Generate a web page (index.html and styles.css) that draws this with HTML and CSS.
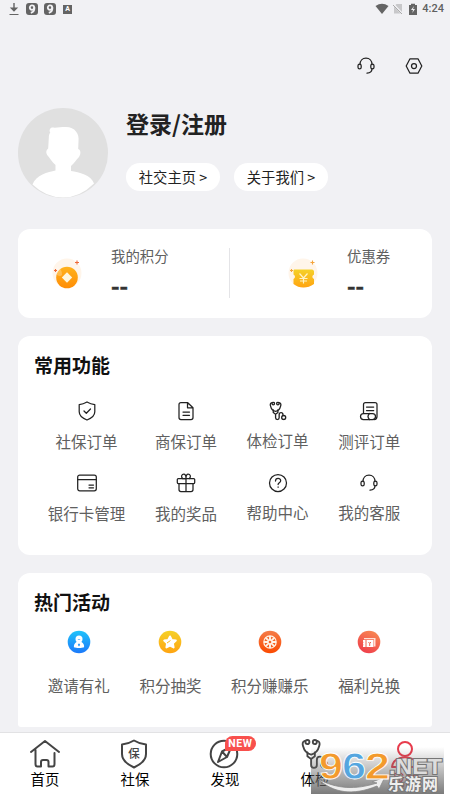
FILE: index.html
```html
<!DOCTYPE html>
<html lang="zh-CN">
<head>
<meta charset="utf-8">
<title>我的</title>
<link rel="stylesheet" href="styles.css">
</head>
<body>
<svg class="defs" width="0" height="0" aria-hidden="true">
  <defs>
    <linearGradient id="gold" x2="0" y2="1"><stop stop-color="#ffb21d"/><stop offset="1" stop-color="#ff8d05"/></linearGradient>
    <linearGradient id="blue" x2="0" y2="1"><stop stop-color="#20c3fa"/><stop offset="1" stop-color="#1c79fa"/></linearGradient>
    <linearGradient id="yellow" x2="0" y2="1"><stop stop-color="#f5d128"/><stop offset="1" stop-color="#ffa411"/></linearGradient>
    <linearGradient id="orange" x2="0" y2="1"><stop stop-color="#f47c48"/><stop offset="1" stop-color="#fb4a00"/></linearGradient>
    <linearGradient id="red" x1=".8" x2=".3" y2="1"><stop stop-color="#f88a52"/><stop offset="1" stop-color="#ef3e4b"/></linearGradient>
    <symbol id="headset" viewBox="0 0 18 18"><path d="M3 7.5C3 3.700 5.500 1.200 9 1.200s6 2.500 6 6.300M15 11.500c0 3-2.200 4.500-5 4.700"/><rect x="1" y="7.200" width="3.200" height="4.600" rx="1.600"/><rect x="13.800" y="7.200" width="3.200" height="4.600" rx="1.600"/></symbol>
    <symbol id="stethoscope" viewBox="0 0 18 18"><path d="M2.500 1.200C1 1.500.9 3 1.500 4.600c.6 2.500 2.200 4.200 4.700 4.800 2.500-.6 4.100-2.300 4.700-4.800.6-1.600.5-3.100-1-3.400"/><circle cx="4" cy="1.900" r="1.200"/><circle cx="8.400" cy="1.900" r="1.200"/><path d="M4 8v2.400l2.200 1.600v3.500c0 2.300 3.400 2.300 3.400 0v-3c0-2.600 3.600-2.600 3.600 0v1M8.400 8v2.400L6.200 12"/><circle cx="13.900" cy="15.200" r="1.900"/></symbol>
  </defs>
</svg>
<div class="screen">
  <header class="status">
    <div class="status-left">
      <svg width="10" height="13" viewBox="0 0 10 13"><path d="M5 0v7M2.500 5.200 5 7.700l2.500-2.500z" fill="#646464" stroke="#646464" stroke-width="1.400"/><path d="M.5 11.500h9" stroke="#646464"/></svg>
      <span class="nine"><svg width="12" height="12" viewBox="0 0 12 12"><circle cx="6" cy="4.600" r="2.200"/><path d="M8.300 4.200c.5 2.700-.9 4.900-3.500 5.600"/></svg></span>
      <span class="nine"><svg width="12" height="12" viewBox="0 0 12 12"><circle cx="6" cy="4.600" r="2.200"/><path d="M8.300 4.200c.5 2.700-.9 4.900-3.500 5.600"/></svg></span>
      <span class="letter">A</span>
    </div>
    <div class="status-right">
      <svg width="14" height="12" viewBox="0 0 14 12"><path d="M.5 3Q7-1.500 13.500 3L7 11z" fill="#646464"/></svg>
      <svg width="10" height="12" viewBox="0 0 10 12"><path d="M3.500 1H9v9.500H1V3.500z" fill="#c8c8ca"/><path d="m.5 1.500 9 9.500" stroke="#f1f1f4" stroke-width="2"/><path d="m0 2 9 9" stroke="#aaa"/></svg>
      <svg width="8" height="12" viewBox="0 0 8 12"><path d="M0 2h2V.8h4V2h2v10H0z" fill="#646464"/><path d="M5 3 2 7h2l-.7 3L6 6H4z" fill="#f1f1f4"/></svg>
      <span class="time">4:24</span>
    </div>
  </header>

  <div class="tools">
    <svg class="line" width="18" height="18"><use href="#headset"/></svg>
    <svg class="line" width="18" height="18" viewBox="0 0 18 18"><path d="M5 1.800h8L16.800 9 13 16.200H5L1.200 9z"/><circle cx="9" cy="9" r="2.500"/></svg>
  </div>

  <section class="profile">
    <svg width="90" height="90" viewBox="0 0 90 90">
      <circle cx="45" cy="45" r="45" fill="#e0e0e0"/>
      <path d="M34 19.500c5 .5 8-.5 14-.5 9 0 13.500 7 12.500 14l-.3 8c2.800 1 2.800 5 .8 8-3 3-4.500 6-8 9v5c8 1 20 4 23 12.500Q62 89.500 45 89.500T14.500 76.500C18 67 30 64 37.500 62.500V57c-3.500-3-5-6-7.500-9-2.500-3-2-6 .2-7.500l.6-10.500c0-3 .5-4 1.500-5.500-1.500-2-.3-4.500 1.700-5z" fill="#fff"/>
    </svg>
    <div class="profile-info">
      <h1>登录/注册</h1>
      <div class="pills"><span class="pill">社交主页 &gt;</span><span class="pill">关于我们 &gt;</span></div>
    </div>
  </section>

  <section class="card wallet">
    <div class="asset">
      <svg width="30" height="32" viewBox="0 0 30 32"><circle cx="15" cy="15" r="14.500" fill="#fff5ea"/><circle cx="15" cy="19.500" r="10.800" fill="url(#gold)"/><path d="m15 14.300 5.200 5.200-5.200 5.200-5.200-5.200z" fill="#fff6dc"/><path d="M5 9a8 8 0 0 1 5 8q-2 2-5 0z" fill="#fff" opacity=".25"/><path d="M25 2.500v4M23 4.500h4M3.500 11v3M2 12.500h3" stroke="#f06a38" stroke-width="1.100"/></svg>
      <div class="asset-text"><span>我的积分</span><b>--</b></div>
    </div>
    <div class="asset second">
      <svg width="30" height="32" viewBox="0 0 30 32"><circle cx="15" cy="15" r="14.500" fill="#fff5ea"/><path d="M6 11.500h18c1 0 2 1 2 2v3c-2.200 1-2.200 3.500 0 4.500v5q-5 3.500-10.500 3.500T5.500 26v-5c2-1 2-3.500 0-4.500v-4z" fill="url(#yellow)"/><path d="m11.500 15.500 4 4.500 4-4.500M15.500 20v5.500M11.500 20.500h8M12 23h7" stroke="#fff3c5" stroke-width="1.200" fill="none"/><path d="M24.500 2.500v4M22.500 4.500h4M3.500 11v3M2 12.500h3" stroke="#f5a43a" stroke-width="1.100"/></svg>
      <div class="asset-text"><span>优惠券</span><b>--</b></div>
    </div>
  </section>

  <section class="card common">
    <h2>常用功能</h2>
    <div class="grid">
      <div class="item"><svg class="line" width="20" height="20" viewBox="0 0 20 20"><path d="M10 1c2.500 1.500 4.500 2.300 7.800 2.600v7.200c0 4-3.300 6.500-7.800 8.200-4.500-1.700-7.800-4.200-7.800-8.200V3.600C5.500 3.300 7.500 2.500 10 1zM7 10l2.300 2.300L13.500 8"/></svg><span>社保订单</span></div>
      <div class="item"><svg class="line" width="20" height="20" viewBox="0 0 20 20"><path d="M11.500 1.500H5Q3 1.500 3 3.500v13q0 2 2 2h10q2 0 2-2V6.800zV6.800H17M7 11h6.500M7 14.300h6.500"/></svg><span>商保订单</span></div>
      <div class="item raised"><svg class="line" width="20" height="20" viewBox="-1 -.5 19 19"><use href="#stethoscope" width="18" height="18"/></svg><span>体检订单</span></div>
      <div class="item"><svg class="line" width="20" height="20" viewBox="0 0 20 20"><path d="M4.500 12V3.500q0-2 2-2H16q2 0 2 2v12q0 3-3 3M7.500 6h7.200M7.500 9.500h7.200"/><rect x="1.500" y="12.500" width="15" height="6" rx="3"/><path d="M10.500 12.500c-2 2-2 4 0 6"/></svg><span>测评订单</span></div>
      <div class="item"><svg class="line" width="20" height="20" viewBox="0 0 20 20"><rect x=".7" y="2" width="18.600" height="15.800" rx="2"/><path d="M.7 6.500h18.600M12 12h4.500M12 14.800h4.500"/></svg><span>银行卡管理</span></div>
      <div class="item"><svg class="line" width="20" height="20" viewBox="0 0 20 20"><rect x="1.300" y="5.500" width="17.400" height="5" rx="1"/><path d="M3 10.500v6q0 2 2 2h10q2 0 2-2v-6M10 5.500v13M10 5.500H6.500C4.500 3 6 1.200 7.800 1.200S10 3 10 5.500c0-2.500.5-4.300 2.200-4.300s3.300 1.800 1.300 4.300"/></svg><span>我的奖品</span></div>
      <div class="item raised"><svg class="line" width="20" height="20" viewBox="0 0 20 20"><circle cx="10" cy="10" r="8.500"/><path d="M7.500 8c0-3.500 5.200-3.500 5.200-.3 0 2-2.600 2.100-2.600 3.800M10.100 13.900v.4"/></svg><span>帮助中心</span></div>
      <div class="item raised"><svg class="line" width="20" height="20" viewBox="-1 -1 20 20"><use href="#headset" width="18" height="18"/></svg><span>我的客服</span></div>
    </div>
  </section>

  <section class="card hot">
    <h2>热门活动</h2>
    <div class="grid">
      <div class="item"><svg width="24" height="24" viewBox="0 0 24 24"><circle cx="12" cy="12" r="11.300" fill="url(#blue)"/><circle cx="12" cy="9" r="3.500" fill="#fff"/><path d="M9.500 12h5c2 1 2.800 3 2.600 5.200-2.500 1-7.700 1-10.200 0C6.700 15 7.500 13 9.500 12z" fill="#fff"/><path d="m12 13.300 1.200 1.500L12 16.500l-1.200-1.700zM10.500 9.300q1.500 1.200 3 0" fill="#2494fa"/></svg><span>邀请有礼</span></div>
      <div class="item"><svg width="24" height="24" viewBox="0 0 24 24"><circle cx="12" cy="12" r="11.300" fill="url(#yellow)"/><path d="m12 6.500 1.800 3.500 4 .6-2.900 2.800.7 4-3.600-1.900-3.600 1.900.7-4-2.900-2.800 4-.6z" fill="#fff" stroke="#fff" stroke-width="2" stroke-linejoin="round"/><path d="m9 13 3.500-2.500" stroke="#fbbc1b"/></svg><span>积分抽奖</span></div>
      <div class="item"><svg width="24" height="24" viewBox="0 0 24 24"><circle cx="12" cy="12" r="11.300" fill="url(#orange)"/><circle cx="12" cy="12" r="6.200" fill="none" stroke="#fff4e8" stroke-width="1.200"/><path d="M12 6v12M6 12h12M7.800 7.800l8.400 8.400M16.200 7.800l-8.400 8.400" stroke="#fff4e8" stroke-width="1.900"/><circle cx="12" cy="12" r="1.300" fill="#f76123"/></svg><span>积分赚赚乐</span></div>
      <div class="item"><svg width="24" height="24" viewBox="0 0 24 24"><circle cx="12" cy="12" r="11.300" fill="url(#red)"/><path d="M7 8h11.500v8.500H17V9.300H7z" fill="#ffe1d6"/><path d="M6 10h10.500v7H6v-1.500q1-.5 0-1.500V13q1-.5 0-1.500z" fill="#fff"/><path d="M9 10v7M11.500 12l1.200 1.500 1.200-1.500M12.700 13.500V16" stroke="#ef6550" fill="none"/></svg><span>福利兑换</span></div>
    </div>
  </section>

  <nav class="tabs">
    <div class="tab"><svg class="tab-icon" width="32" height="32" viewBox="0 0 32 32"><path d="M2 14 16 3l14 11M6.500 12v14q0 2.500 2 2.500H12V24q0-2 2-2h3.500q2 0 2 2v4.500h4q2 0 2-2.500V15"/></svg><span>首页</span></div>
    <div class="tab"><svg class="tab-icon" width="32" height="32" viewBox="0 0 32 32"><path d="M15 2.500c4 2.500 7 3.500 12 4V16c0 6.500-5.500 10.500-12 13.500C8.500 26.500 3 22.500 3 16V6.500c5-.5 8-1.500 12-4z"/><text class="shield-text" x="15" y="20">保</text></svg><span>社保</span></div>
    <div class="tab"><svg class="tab-icon" width="32" height="32" viewBox="0 0 32 32"><circle cx="15" cy="16" r="13.300"/><path d="m22.500 8.500-4.500 10.500-9 5 4-10.500zM13 13.500l5 5.500"/></svg><span>发现</span><b class="badge">NEW</b></div>
    <div class="tab"><svg class="tab-icon" width="32" height="32" viewBox="-1 -.5 19 19"><use href="#stethoscope" width="18" height="18"/></svg><span>体检</span></div>
    <div class="tab active"><svg class="tab-icon" width="32" height="32" viewBox="0 0 32 32"><circle cx="16" cy="11" r="7"/><path d="M3 29c1-13 25-13 26 0z"/></svg><span>我的</span></div>
    <div class="watermark">
      <svg width="133" height="47" viewBox="0 0 133 47">
        <path d="M7 32C26 42 44 43 66 36l-5-1 13-5-6 12-2-3C42 49 22 46 7 32z" fill="#eee" stroke="#888" stroke-width=".8"/>
        <g class="wm-numbers"><text x="8" y="32" fill="#f39a2c" textLength="24" lengthAdjust="spacingAndGlyphs">9</text><text x="31" y="32" fill="#55a6df" textLength="24" lengthAdjust="spacingAndGlyphs">6</text><text x="54" y="32" fill="#f39a2c" textLength="25" lengthAdjust="spacingAndGlyphs">2</text></g>
        <text class="wm-net" x="78" y="27" textLength="53" lengthAdjust="spacingAndGlyphs">.NET</text>
        <text class="wm-site" x="77" y="43" textLength="50">乐游网</text>
      </svg>
    </div>
  </nav>
</div>
</body>
</html>
```
FILE: styles.css
```css
* { box-sizing: border-box; }
body { margin: 0; font-family: "Noto Sans CJK SC", sans-serif; background: #f1f1f4; color: #222; }
h1, h2 { margin: 0; }
svg { display: block; flex: none; }
.defs { position: absolute; }
.screen { height: 800px; display: flex; flex-direction: column; overflow: hidden; }

.status { height: 18px; padding: 0 6px 0 9px; display: flex; justify-content: space-between; align-items: center; }
.status-left, .status-right { display: flex; align-items: center; }
.status-left > svg { margin-right: 7px; }
.nine { width: 12px; height: 12px; border-radius: 3px; background: #646464; margin-right: 6px; }
.nine path, .nine circle { fill: none; stroke: #f1f1f4; stroke-width: 1.8; }
.letter { width: 9px; height: 9px; margin-left: 1px; background: #646464; color: #fff; font: bold 7px/9px Roboto, sans-serif; text-align: center; }
.status-right svg:nth-child(1) { margin-right: 4px; }
.status-right svg:nth-child(2) { margin-right: 6px; }
.status-right svg:nth-child(3) { margin-right: 5px; }
.time { font: 500 11px/18px Roboto, sans-serif; color: #606060; }

.tools { height: 90px; padding: 39px 27px 0 0; display: flex; justify-content: flex-end; gap: 30px; }
.line { fill: none; stroke: #222; stroke-width: 1.25; stroke-linecap: round; stroke-linejoin: round; }

.profile { height: 121px; padding-left: 18px; display: flex; gap: 18px; }
h1 { font-size: 23px; line-height: 30px; font-weight: 700; }
.pills { display: flex; gap: 14px; margin-top: 25px; }
.pill { width: 94px; height: 28px; border-radius: 14px; background: #fff; text-align: center; font-size: 14.3px; line-height: 27px; white-space: nowrap; }

.card { flex: none; margin: 0 18px 18px; border-radius: 12px; background: #fff; }
.wallet { height: 89px; display: flex; padding-top: 19px; }
.asset { display: flex; width: 212px; height: 50px; padding-left: 34px; border-right: 1px solid #e4e4e7; }
.asset.second { width: 202px; padding-left: 58px; border: 0; }
.asset > svg { margin-top: 10px; }
.asset-text { display: flex; flex-direction: column; margin-left: 29px; color: #606060; font-size: 14.4px; line-height: 16px; white-space: nowrap; }
.asset-text b { font-size: 23px; line-height: 26px; margin-top: 8px; color: #333; -webkit-text-stroke: .5px #333; }

.common { height: 219px; padding: 15px 17px 0 16px; }
h2 { font-size: 19px; line-height: 28px; font-weight: 700; color: #111; }
.grid { display: grid; grid-template-columns: repeat(4, auto); justify-content: space-around; }
.common .grid { margin-top: 22px; margin-left: -1px; }
.item { height: 72px; display: flex; flex-direction: column; align-items: center; color: #606060; font-size: 15.5px; line-height: 22px; white-space: nowrap; }
.item span { margin-top: 9px; }
.raised span { margin-top: 8px; }
.hot { height: 154px; margin-bottom: 5px; padding: 15px 17px 0 16px; border-radius: 12px 12px 3px 3px; }
.hot .grid { margin-top: 14px; margin-left: -1px; }
.hot .item span { margin-top: 20px; }

.tabs { position: relative; flex: none; height: 68px; display: grid; grid-template-columns: repeat(5, 1fr); background: #fff; border-top: 1px solid #e2e2e4; }
.tab { position: relative; display: flex; flex-direction: column; align-items: center; padding-top: 5px; color: #000; font-size: 14.4px; line-height: 17px; }
.tab-icon { fill: none; stroke: #444; stroke-width: 2; stroke-linecap: round; stroke-linejoin: round; }
.tab:nth-child(4) .tab-icon { stroke-width: 1.1; }
.active { color: #e83b4c; }
.active .tab-icon { stroke: #e83b4c; }
.shield-text { font-size: 11.5px; font-weight: 500; text-anchor: middle; fill: #444; stroke: none; }
.badge { position: absolute; left: 45px; top: 3px; width: 31px; height: 15px; border-radius: 8px 8px 8px 2px; background: #f8504c; color: #fff; font: bold 10.5px/15px Roboto, sans-serif; text-align: center; letter-spacing: .6px; }
.watermark { position: absolute; left: 311px; top: 14px; width: 133px; height: 47px; background: linear-gradient(rgba(100, 100, 100, 0), rgba(100, 100, 100, .85)); }
.watermark svg { overflow: visible; }
.wm-numbers { font: bold 36px "Liberation Sans", sans-serif; stroke: #fff; stroke-width: .8; }
.wm-net { font: bold 22px "Liberation Sans", sans-serif; fill: #ddd; stroke: #777; stroke-width: 2; paint-order: stroke; }
.wm-site { font-size: 16px; font-weight: 700; fill: #eee; stroke: #777; stroke-width: 2; paint-order: stroke; }
```
